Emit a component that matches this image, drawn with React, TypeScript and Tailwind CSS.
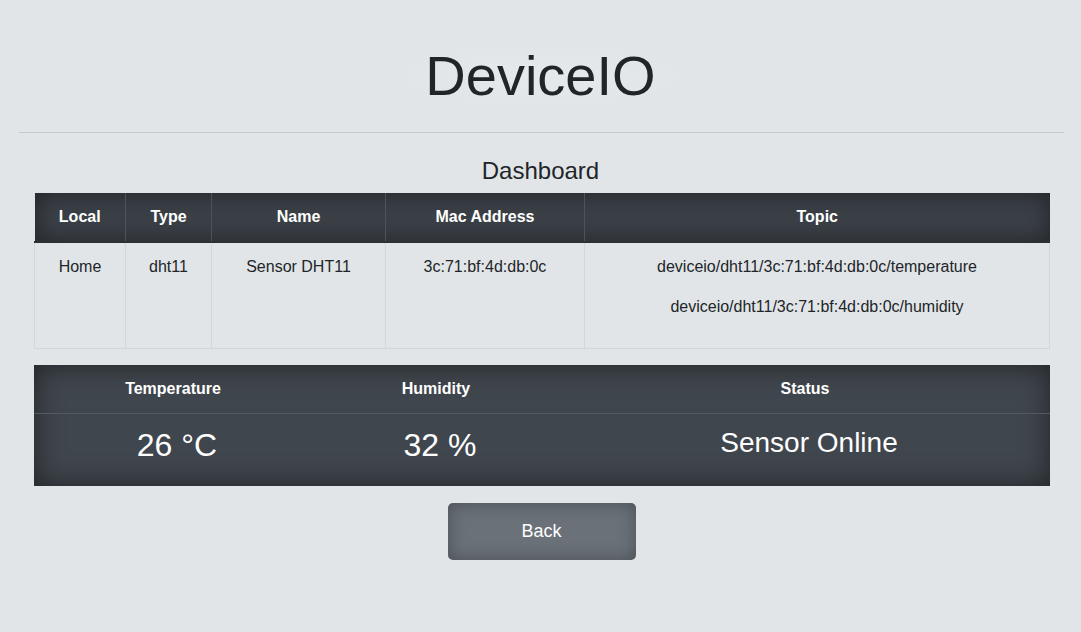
export default function App() {
    const font = { fontFamily: '"Liberation Sans", Arial, sans-serif' };
    return (
        <div style={font} className="min-h-[632px] bg-[#e1e5e8] text-[#212529] pt-[42px]">
            <div className="flex justify-center">
                <h1 className="text-[56px] leading-[1.2] px-10 rounded-full bg-[radial-gradient(closest-side,#e6e9eb,#e1e5e8)]">DeviceIO</h1>
            </div>
            <hr className="ml-[19px] mr-[17px] mt-[23px] border-0 border-t border-[#c5c9cc]" />
            <h4 className="text-center text-[24px] leading-[1.2] mt-[24px] mb-[7px]">Dashboard</h4>

            <div className="ml-[34px] mr-[31px]">
                <table className="w-full border-collapse text-center text-[16px] leading-6">
                    <thead>
                        <tr className="bg-[#3b4047] text-white shadow-[inset_0_0_24px_rgba(0,0,0,0.45)]">
                            <th className="w-[91px] px-3 py-3 border-b-2 border-b-[#2c3035] border-r border-r-[#4d535a] font-bold">Local</th>
                            <th className="w-[86px] px-3 py-3 border-b-2 border-b-[#2c3035] border-r border-r-[#4d535a] font-bold">Type</th>
                            <th className="w-[174px] px-3 py-3 border-b-2 border-b-[#2c3035] border-r border-r-[#4d535a] font-bold">Name</th>
                            <th className="w-[199px] px-3 py-3 border-b-2 border-b-[#2c3035] border-r border-r-[#4d535a] font-bold">Mac Address</th>
                            <th className="px-3 py-3 border-b-2 border-b-[#2c3035] font-bold">Topic</th>
                        </tr>
                    </thead>
                    <tbody>
                        <tr className="align-top">
                            <td className="px-3 pt-3 pb-[13px] border border-[#d3d7da]">Home</td>
                            <td className="px-3 pt-3 pb-[13px] border border-[#d3d7da]">dht11</td>
                            <td className="px-3 pt-3 pb-[13px] border border-[#d3d7da]">Sensor DHT11</td>
                            <td className="px-3 pt-3 pb-[13px] border border-[#d3d7da]">3c:71:bf:4d:db:0c</td>
                            <td className="px-3 pt-3 pb-[13px] border border-[#d3d7da]">
                                <p className="mb-4">deviceio/dht11/3c:71:bf:4d:db:0c/temperature</p>
                                <p className="mb-4">deviceio/dht11/3c:71:bf:4d:db:0c/humidity</p>
                            </td>
                        </tr>
                    </tbody>
                </table>

                <table className="w-full mt-[16px] border-collapse text-center text-white bg-[#40464d] shadow-[inset_0_0_28px_rgba(0,0,0,0.5)]">
                    <tbody>
                        <tr>
                            <th className="w-[278px] px-3 py-3 text-[16px] leading-6 font-bold border-b border-b-[#545a61]">Temperature</th>
                            <th className="w-[248px] px-3 py-3 text-[16px] leading-6 font-bold border-b border-b-[#545a61]">Humidity</th>
                            <th className="px-3 py-3 text-[16px] leading-6 font-bold border-b border-b-[#545a61]">Status</th>
                        </tr>
                        <tr className="align-top">
                            <td className="pl-5 pr-3 pt-3 pb-[14px]">
                                <h2 className="text-[32px] leading-[1.2] mb-2">26 °C</h2>
                            </td>
                            <td className="pl-5 pr-3 pt-3 pb-[14px]">
                                <h2 className="text-[32px] leading-[1.2] mb-2">32 %</h2>
                            </td>
                            <td className="pl-5 pr-3 pt-3 pb-[14px]">
                                <h3 className="text-[28px] leading-[1.2] mb-2">Sensor Online</h3>
                            </td>
                        </tr>
                    </tbody>
                </table>
            </div>

            <div className="flex justify-center mt-[17px] pl-[2px]">
                <button className="w-[188px] h-[57px] rounded-[5px] bg-[#6a7179] text-white text-[18px] shadow-[inset_0_0_18px_rgba(0,0,0,0.3)]">
                    Back
                </button>
            </div>
        </div>
    );
}
